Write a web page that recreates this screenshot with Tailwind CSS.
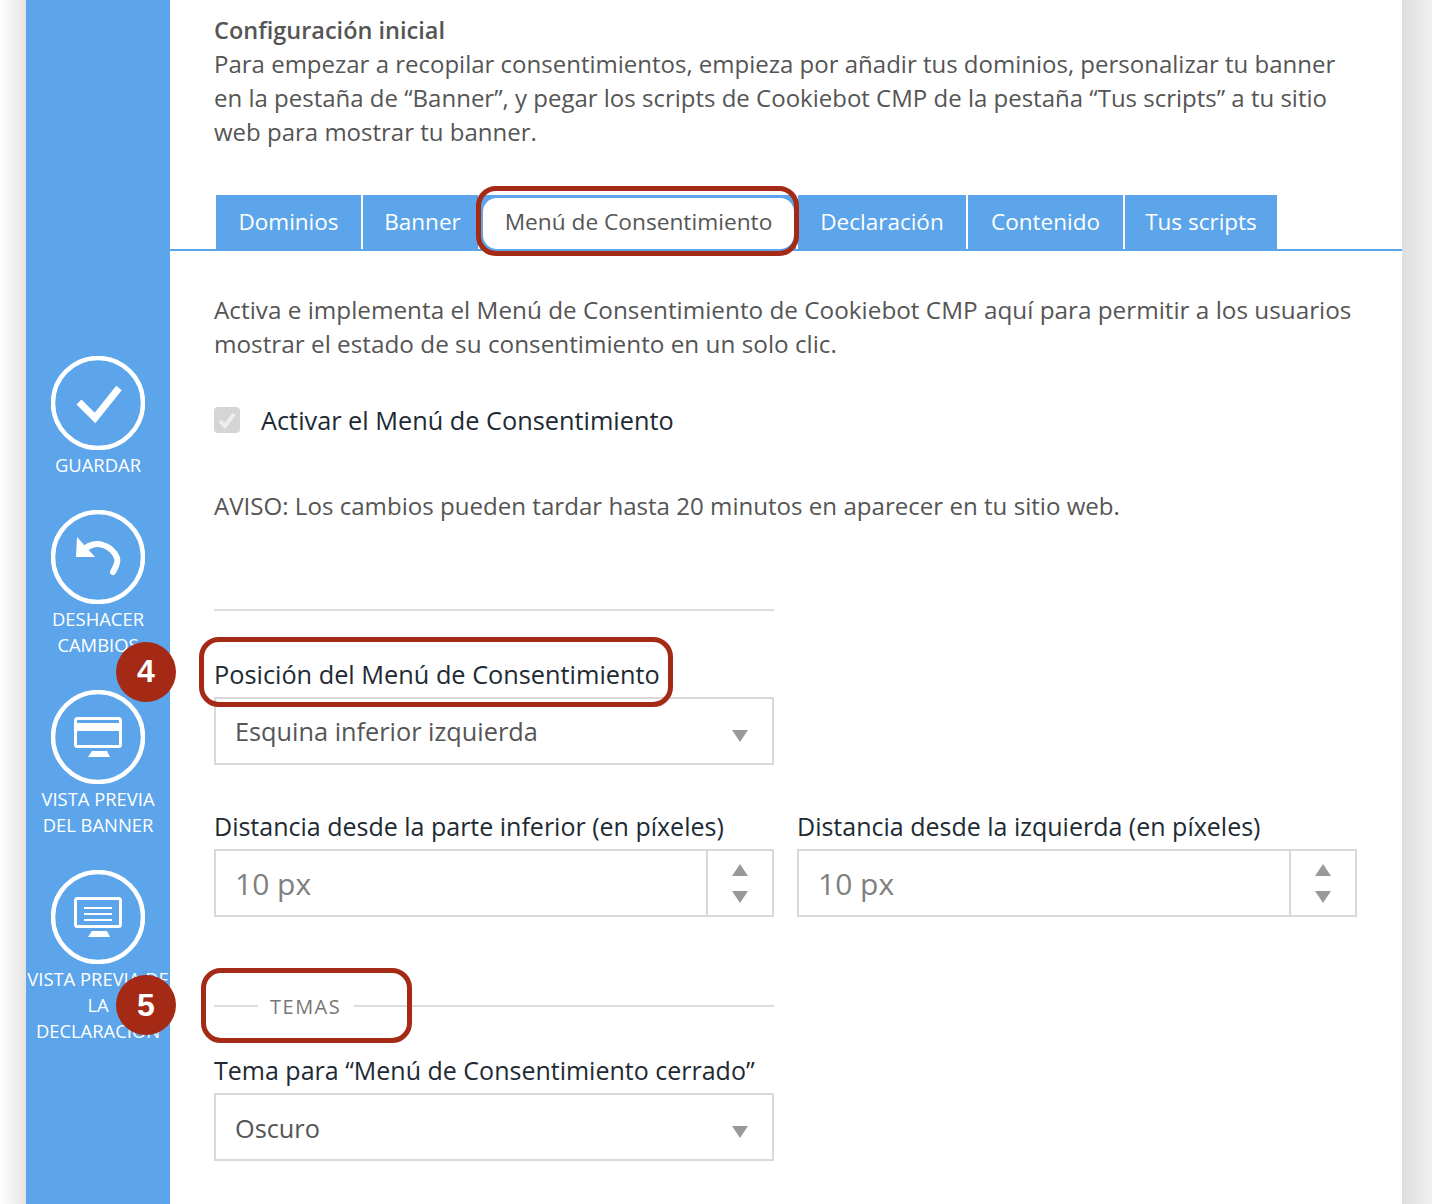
<!doctype html>
<html>

<head>
	<meta charset="UTF-8">
	<meta name="viewport" content="width=device-width, initial-scale=1.0">
	<script src="https://cdn.jsdelivr.net/npm/@tailwindcss/browser@4"></script>
</head>

<body class="bg-white">

	<div class="relative flex h-[1204px] w-[1432px] overflow-hidden font-['Open_Sans',sans-serif] text-[#555]">

		<!-- page shadow left -->
		<div class="w-[26px] flex-none bg-linear-to-r from-white to-[#e4e4e4]"></div>

		<!-- Sidebar -->
		<div class="flex w-[144px] flex-none flex-col items-center bg-[#5ca5ea] pt-[356px] text-center text-[18.400px] leading-[26px] text-white">
			<div class="flex h-[154px] w-full flex-col items-center">
				<svg class="h-[94px] w-[94px]" viewBox="0 0 94 94" fill="none" stroke="white">
					<circle cx="47" cy="47" r="45" stroke-width="4.500" />
					<path d="M28 46 L44 62 L68 32" stroke-width="7" />
				</svg>
				<div class="mt-[2px]">GUARDAR</div>
			</div>
			<div class="flex h-[180px] w-full flex-col items-center">
				<svg class="h-[94px] w-[94px]" viewBox="0 0 94 94" fill="none" stroke="white">
					<circle cx="47" cy="47" r="45" stroke-width="4.500" />
					<path d="M33 40 C38 34 46 33 52 35 C62 38 68 48 66 53 C65 57 63 60 62 62" stroke-width="6" stroke-linecap="round" />
					<path d="M26 27 L25 47 L44 47 Z" fill="white" stroke="none" />
				</svg>
				<div class="mt-[2px]">DESHACER<br>CAMBIOS</div>
			</div>
			<div class="flex h-[180px] w-full flex-col items-center">
				<svg class="h-[94px] w-[94px]" viewBox="0 0 94 94" fill="none" stroke="white">
					<circle cx="47" cy="47" r="45" stroke-width="4.500" />
					<rect x="24.500" y="28.500" width="45" height="28" rx="2" stroke-width="3" />
					<rect x="26" y="33" width="42" height="8" fill="white" stroke="none" />
					<path d="M41 61 H56 L59 67 H37 Z" fill="white" stroke="none" />
				</svg>
				<div class="mt-[2px]">VISTA PREVIA<br>DEL BANNER</div>
			</div>
			<div class="flex w-full flex-col items-center">
				<svg class="h-[94px] w-[94px]" viewBox="0 0 94 94" fill="none" stroke="white">
					<circle cx="47" cy="47" r="45" stroke-width="4.500" />
					<rect x="24.500" y="28.500" width="45" height="28" rx="2" stroke-width="3" />
					<path d="M33 38 H61 M33 44 H61 M33 50 H61" stroke-width="2" />
					<path d="M41 61 H56 L59 67 H37 Z" fill="white" stroke="none" />
				</svg>
				<div class="mt-[2px] w-full whitespace-nowrap">VISTA PREVIA DE<br>LA<br>DECLARACIÓN</div>
			</div>
		</div>

		<!-- Main -->
		<div class="w-[1232px] flex-none bg-white">
			<div class="pt-[13px] pl-[44px] pr-[50px] text-[24px] leading-[34px]">
				<h2 class="text-[23.500px] font-semibold">Configuración inicial</h2>
				<p>Para empezar a recopilar consentimientos, empieza por añadir tus dominios, personalizar tu banner en la pestaña de “Banner”, y pegar los scripts de Cookiebot CMP de la pestaña “Tus scripts” a tu sitio web para mostrar tu banner.</p>
			</div>

			<!-- Tabs -->
			<div class="mt-[46px] flex h-[56px] gap-[2px] border-b-2 border-[#5ca5ea] pl-[46px] text-[22.500px] text-white">
				<div class="flex h-[54px] w-[145px] items-center justify-center bg-[#5ca5ea]">Dominios</div>
				<div class="flex h-[54px] w-[115px] items-center justify-center bg-[#5ca5ea] pl-[4px]">Banner</div>
				<div class="h-[56px] w-[316px] bg-[#5ca5ea] pt-[3px] pr-[2px] pb-[2px] pl-[3px]">
					<div class="flex h-full items-center justify-center rounded-[14px] bg-white pb-[2px] text-[22.700px] text-[#555]">Menú de Consentimiento</div>
				</div>
				<div class="flex h-[54px] w-[168px] items-center justify-center bg-[#5ca5ea]">Declaración</div>
				<div class="flex h-[54px] w-[155px] items-center justify-center bg-[#5ca5ea]">Contenido</div>
				<div class="flex h-[54px] w-[152px] items-center justify-center bg-[#5ca5ea]">Tus scripts</div>
			</div>

			<div class="pl-[44px] pr-[45px] text-[24.100px] leading-[34px]">
				<p class="mt-[42px] text-[24.300px]">Activa e implementa el Menú de Consentimiento de Cookiebot CMP aquí para permitir a los usuarios mostrar el estado de su consentimiento en un solo clic.</p>

				<div class="mt-[42px] flex h-[34px] items-center gap-[21px] text-[25.300px] text-[#212a33]">
					<div class="flex h-[26px] w-[26px] items-center justify-center rounded-[4px] bg-[#d5d5d5]">
						<svg class="h-[18px] w-[18px]" viewBox="0 0 18 18" fill="none" stroke="#eee" stroke-width="4">
							<path d="M2 10 L7 15 L16 3" />
						</svg>
					</div>
					<span>Activar el Menú de Consentimiento</span>
				</div>

				<p class="mt-[52px]">AVISO: Los cambios pueden tardar hasta 20 minutos en aparecer en tu sitio web.</p>

				<div class="mt-[86px] h-[2px] w-[560px] bg-[#dcdcdc]"></div>

				<div class="mt-[46px] text-[25.300px] leading-[34px] text-[#212a33]">Posición del Menú de Consentimiento</div>
				<div class="mt-[6px] flex h-[68px] w-[560px] items-center justify-between border-2 border-[#d9d9d9] pl-[19px] pr-[24px] text-[25.300px]">
					<span class="mb-[1px]">Esquina inferior izquierda</span>
					<div class="mt-[10px] h-0 w-0 border-x-[8px] border-t-[12px] border-x-transparent border-t-[#999]"></div>
				</div>

				<div class="mt-[44px] flex gap-[23px]">
					<div class="w-[560px] flex-none">
						<div class="text-[25px] leading-[34px] text-[#212a33]">Distancia desde la parte inferior (en píxeles)</div>
						<div class="mt-[6px] flex h-[68px] items-center border-2 border-[#d9d9d9] pl-[19px] text-[30px] text-[#808080]">
							<span class="mt-[2px] flex-1">10 px</span>
							<div class="flex h-full w-[66px] flex-col items-center justify-center gap-[15px] border-l-2 border-[#d9d9d9]">
								<div class="h-0 w-0 border-x-[8px] border-b-[12px] border-x-transparent border-b-[#999]"></div>
								<div class="h-0 w-0 border-x-[8px] border-t-[12px] border-x-transparent border-t-[#999]"></div>
							</div>
						</div>
					</div>
					<div class="w-[560px] flex-none">
						<div class="text-[25px] leading-[34px] text-[#212a33]">Distancia desde la izquierda (en píxeles)</div>
						<div class="mt-[6px] flex h-[68px] items-center border-2 border-[#d9d9d9] pl-[19px] text-[30px] text-[#808080]">
							<span class="mt-[2px] flex-1">10 px</span>
							<div class="flex h-full w-[66px] flex-col items-center justify-center gap-[15px] border-l-2 border-[#d9d9d9]">
								<div class="h-0 w-0 border-x-[8px] border-b-[12px] border-x-transparent border-b-[#999]"></div>
								<div class="h-0 w-0 border-x-[8px] border-t-[12px] border-x-transparent border-t-[#999]"></div>
							</div>
						</div>
					</div>
				</div>

				<!-- Temas divider -->
				<div class="mt-[76px] flex h-[26px] w-[560px] items-center text-[20px] tracking-[1.500px] text-[#777]">
					<div class="h-[2px] w-[44px] bg-[#dcdcdc]"></div>
					<span class="pt-[2px] pr-[13px] pl-[12px]">TEMAS</span>
					<div class="h-[2px] flex-1 bg-[#dcdcdc]"></div>
				</div>

				<div class="mt-[34px] text-[25px] leading-[34px] text-[#212a33]">Tema para “Menú de Consentimiento cerrado”</div>
				<div class="mt-[6px] flex h-[68px] w-[560px] items-center justify-between border-2 border-[#d9d9d9] pl-[19px] pr-[24px] text-[25.300px]">
					<span class="mt-[1px]">Oscuro</span>
					<div class="mt-[10px] h-0 w-0 border-x-[8px] border-t-[12px] border-x-transparent border-t-[#999]"></div>
				</div>
			</div>
		</div>

		<!-- page shadow right -->
		<div class="w-[30px] flex-none bg-linear-to-r from-[#dedede] to-[#f1f1f1]"></div>

		<!-- Annotations -->
		<div class="absolute left-[476px] top-[186px] h-[70px] w-[323px] rounded-[20px] border-[5px] border-[#a52a15]"></div>
		<div class="absolute left-[199px] top-[637px] h-[70px] w-[474px] rounded-[20px] border-[5px] border-[#a52a15]"></div>
		<div class="absolute left-[201px] top-[968px] h-[75px] w-[211px] rounded-[20px] border-[5px] border-[#a52a15]"></div>
		<div class="absolute left-[116px] top-[642px] flex h-[60px] w-[60px] items-center justify-center rounded-full bg-[#a52a15] pb-[3px] font-['Liberation_Sans',sans-serif] text-[32px] font-bold text-white">4</div>
		<div class="absolute left-[116px] top-[975px] flex h-[60px] w-[60px] items-center justify-center rounded-full bg-[#a52a15] font-['Liberation_Sans',sans-serif] text-[32px] font-bold text-white">5</div>
	</div>

</body>

</html>
